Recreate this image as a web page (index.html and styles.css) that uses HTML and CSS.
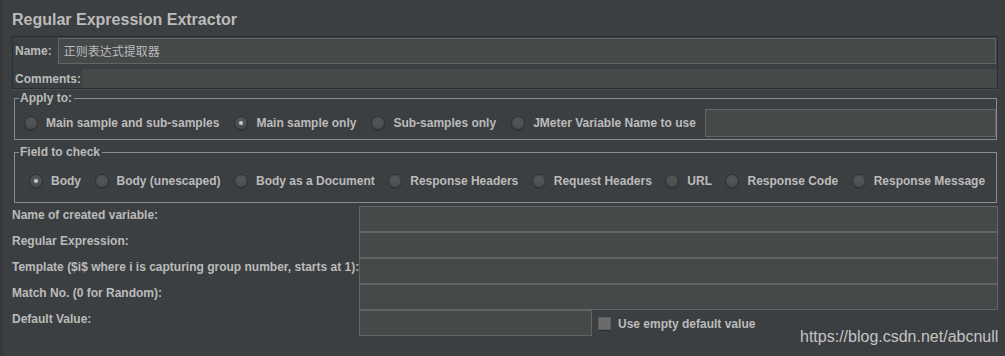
FILE: index.html
```html
<!DOCTYPE html>
<html>
<head>
<meta charset="utf-8">
<link rel="stylesheet" href="styles.css">
</head>
<body>
<div class="app">
  <div class="edge"></div>
  <div class="main">
    <h1 class="title">Regular Expression Extractor</h1>
    <div class="panel">
      <div class="prow name-row">
        <span class="plabel">Name:</span>
        <div class="field name-field">正则表达式提取器</div>
      </div>
      <div class="prow comments-row">
        <span class="plabel comments-label">Comments:</span>
        <div class="field comments-field"></div>
      </div>
    </div>
    <fieldset class="group apply">
      <legend>Apply to:</legend>
      <div class="radios">
        <label class="radio"><span class="dot"></span>Main sample and sub-samples</label>
        <label class="radio"><span class="dot on"></span>Main sample only</label>
        <label class="radio"><span class="dot"></span>Sub-samples only</label>
        <label class="radio"><span class="dot"></span>JMeter Variable Name to use</label>
        <div class="field var-field"></div>
      </div>
    </fieldset>
    <fieldset class="group check">
      <legend>Field to check</legend>
      <div class="radios">
        <label class="radio"><span class="dot on"></span>Body</label>
        <label class="radio"><span class="dot"></span>Body (unescaped)</label>
        <label class="radio"><span class="dot"></span>Body as a Document</label>
        <label class="radio"><span class="dot"></span>Response Headers</label>
        <label class="radio"><span class="dot"></span>Request Headers</label>
        <label class="radio"><span class="dot"></span>URL</label>
        <label class="radio"><span class="dot"></span>Response Code</label>
        <label class="radio"><span class="dot"></span>Response Message</label>
      </div>
    </fieldset>
    <div class="form">
      <span class="flabel">Name of created variable:</span>
      <div class="field frow"></div>
      <span class="flabel">Regular Expression:</span>
      <div class="field frow"></div>
      <span class="flabel">Template ($i$ where i is capturing group number, starts at 1):</span>
      <div class="field frow"></div>
      <span class="flabel">Match No. (0 for Random):</span>
      <div class="field frow"></div>
      <span class="flabel">Default Value:</span>
      <div class="last">
        <div class="field frow short"></div>
        <label class="check-box"><span class="box"></span>Use empty default value</label>
      </div>
    </div>
  </div>
</div>
<div class="watermark">https://blog.csdn.net/abcnull</div>
</body>
</html>
```

FILE: styles.css
```css
html, body {
  margin: 0;
  padding: 0;
}
body {
  width: 1005px;
  height: 356px;
  overflow: hidden;
  background: #3c3f41;
  color: #bbbbbb;
  font-family: "Liberation Sans", Arial, "Noto Sans CJK SC", sans-serif;
  font-size: 12px;
  font-weight: bold;
  position: relative;
}
.app {
  display: flex;
  height: 356px;
}
.edge {
  width: 3px;
  background: #353739;
  flex: none;
}
.main {
  flex: 1;
  padding: 0 7px 0 9px;
}
.title {
  margin: 0;
  padding-top: 10px;
  height: 36px;
  box-sizing: border-box;
  font-size: 16px;
  line-height: 20px;
  font-weight: bold;
  color: #bbbbbb;
}
.field {
  background: #45494a;
  border: 1px solid #646464;
  box-sizing: border-box;
  color: #bbbbbb;
}
.panel {
  border: 1px solid #2b2d2f;
  box-shadow: 0 1px 0 #4a4d4f;
  height: 53px;
  box-sizing: border-box;
}
.prow {
  display: flex;
  align-items: center;
}
.name-row {
  padding: 1px 1px 0 1px;
  height: 27px;
  box-sizing: border-box;
}
.plabel {
  padding-left: 1px;
}
.name-field {
  margin-left: 6px;
  flex: 1;
  height: 26px;
  font-family: "Noto Sans CJK SC", sans-serif;
  font-weight: normal;
  font-size: 12px;
  line-height: 24px;
  padding-left: 5px;
}
.comments-row {
  margin-top: 5px;
  height: 19px;
}
.comments-label {
  padding-left: 2px;
}
.comments-field {
  flex: 1;
  height: 19px;
  border: none;
  margin-left: 1px;
}
.group {
  margin: 2px 0 0 2px;
  width: 983px;
  box-sizing: border-box;
  border: 1px solid #8c8c8c;
  padding: 0;
  min-width: 0;
}
.group legend {
  margin-left: 4px;
  padding: 0 2px 0 1px;
  line-height: 14px;
  font-size: 12px;
}
.apply {
  height: 49px;
}
.apply .radios {
  padding: 4px 0 0 9px;
  gap: 15px;
}
.check {
  margin-top: 5px;
  height: 58px;
}
.check .radios {
  padding: 15px 0 0 14px;
  gap: 13.5px;
}
.radios {
  display: flex;
  align-items: center;
}
.radio {
  display: flex;
  align-items: center;
  gap: 8px;
  white-space: nowrap;
  line-height: 14px;
}
.dot {
  width: 14px;
  height: 14px;
  border-radius: 50%;
  box-sizing: border-box;
  background: radial-gradient(circle at 50% 40%, #55585a 0%, #4a4d4f 70%);
  border: 1px solid #2f3133;
  box-shadow: 0 1px 0 #333537;
  display: flex;
  align-items: center;
  justify-content: center;
  flex: none;
}
.dot.on::after {
  content: "";
  width: 4px;
  height: 4px;
  border-radius: 50%;
  background: #c8c8c8;
}
.var-field {
  margin-left: -6px;
  width: 292px;
  height: 28px;
}
.form {
  margin-top: 3px;
  display: grid;
  grid-template-columns: 347px 639px;
  grid-auto-rows: 26px;
}
.flabel {
  padding-top: 2px;
  line-height: 14px;
  white-space: nowrap;
}
.frow {
  height: 26px;
}
.last {
  display: flex;
  align-items: center;
}
.short {
  width: 233px;
  flex: none;
}
.check-box {
  display: flex;
  align-items: center;
  gap: 7px;
  margin-left: 6px;
  margin-top: 1px;
}
.box {
  width: 13px;
  height: 13px;
  box-sizing: border-box;
  background: #6b6b6b;
  border: 1px solid #5e5e5e;
  box-shadow: 0 1px 0 #2e3032;
}
.watermark {
  position: absolute;
  left: 800px;
  top: 328px;
  font-family: "Liberation Sans", Arial, sans-serif;
  font-weight: normal;
  font-size: 16px;
  line-height: 18px;
  color: #c4c4c4;
  white-space: nowrap;
}
```
